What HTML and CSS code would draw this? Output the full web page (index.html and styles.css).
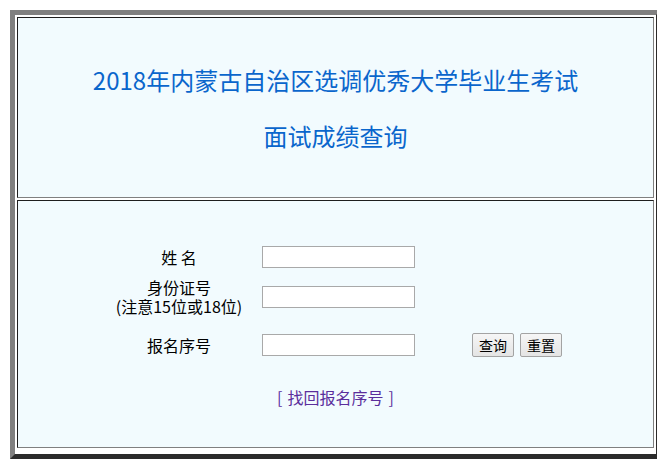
FILE: index.html
```html
<!DOCTYPE html>
<html lang="zh-CN">
<head>
  <meta charset="UTF-8" />
  <title>面试成绩查询</title>
  <link rel="stylesheet" href="styles.css">
</head>
<body>
  <div class="frame">
    <div class="cell title-cell">
      <div class="title-line">2018年内蒙古自治区选调优秀大学毕业生考试</div>
      <div class="title-line">面试成绩查询</div>
    </div>

    <div class="cell form-cell">
      <form class="query-form" onsubmit="return false;">
        <div class="label">姓&nbsp;名</div>
        <div class="field"><input type="text" class="text-input" name="xm"></div>
        <div></div>

        <div class="label label-two">
          <div>身份证号</div>
          <div>(注意15位或18位)</div>
        </div>
        <div class="field"><input type="text" class="text-input" name="sfzh"></div>
        <div></div>

        <div class="label">报名序号</div>
        <div class="field"><input type="text" class="text-input" name="bmxh"></div>
        <div class="buttons">
          <button type="submit" class="btn">查询</button>
          <button type="reset" class="btn">重置</button>
        </div>
      </form>

      <div class="find-link">[<a href="#">找回报名序号</a>]</div>
    </div>
  </div>
</body>
</html>
```

FILE: styles.css
```css
body {
  margin: 10px;
  background-color: #ffffff;
  font-family: "Noto Sans CJK SC", "Liberation Sans", sans-serif;
  color: #000000;
}

.frame {
  width: 637px;
  height: 435px;
  border: 5px solid;
  border-color: #808080 #2b2b2b #2b2b2b #808080;
  padding: 2px;
  display: flex;
  flex-direction: column;
  gap: 2px;
}

.cell {
  background-color: #f2fbfe;
  border: 1px solid;
  border-color: #1e1e1e #808080 #808080 #1e1e1e;
}

.title-cell {
  height: 179px;
  display: flex;
  flex-direction: column;
  justify-content: center;
  align-items: center;
  color: #0a66cc;
  font-size: 24px;
}

.title-line {
  line-height: 56px;
}

.form-cell {
  height: 248px;
  padding-top: 38px;
  box-sizing: border-box;
}

.query-form {
  margin-left: 81px;
  display: grid;
  grid-template-columns: 160px 210px 95px;
  grid-template-rows: 36px 43px 53px;
  column-gap: 3px;
  align-items: center;
}

.label {
  text-align: center;
  font-size: 16px;
  line-height: 20px;
}

.label-two {
  line-height: 19px;
}

.text-input {
  display: block;
  width: 153px;
  height: 22px;
  box-sizing: border-box;
  border: 1px solid #a9a9a9;
  background: #ffffff;
  padding: 0 2px;
  margin: 0;
}

.buttons {
  display: flex;
  gap: 6px;
  margin-left: -3px;
}

.btn {
  width: 42px;
  height: 24px;
  padding: 0;
  font-family: "Noto Sans CJK SC", sans-serif;
  font-size: 14px;
  color: #000000;
  background: linear-gradient(#f6f6f6, #e4e4e4);
  border: 1px solid #a3a3a3;
  border-radius: 2px;
}

.find-link {
  margin-top: 14px;
  text-align: center;
  font-size: 16px;
  line-height: 24px;
  color: #5b2e9c;
}

.find-link a {
  margin: 0 5px;
  color: #5b2e9c;
  text-decoration: none;
}
```
